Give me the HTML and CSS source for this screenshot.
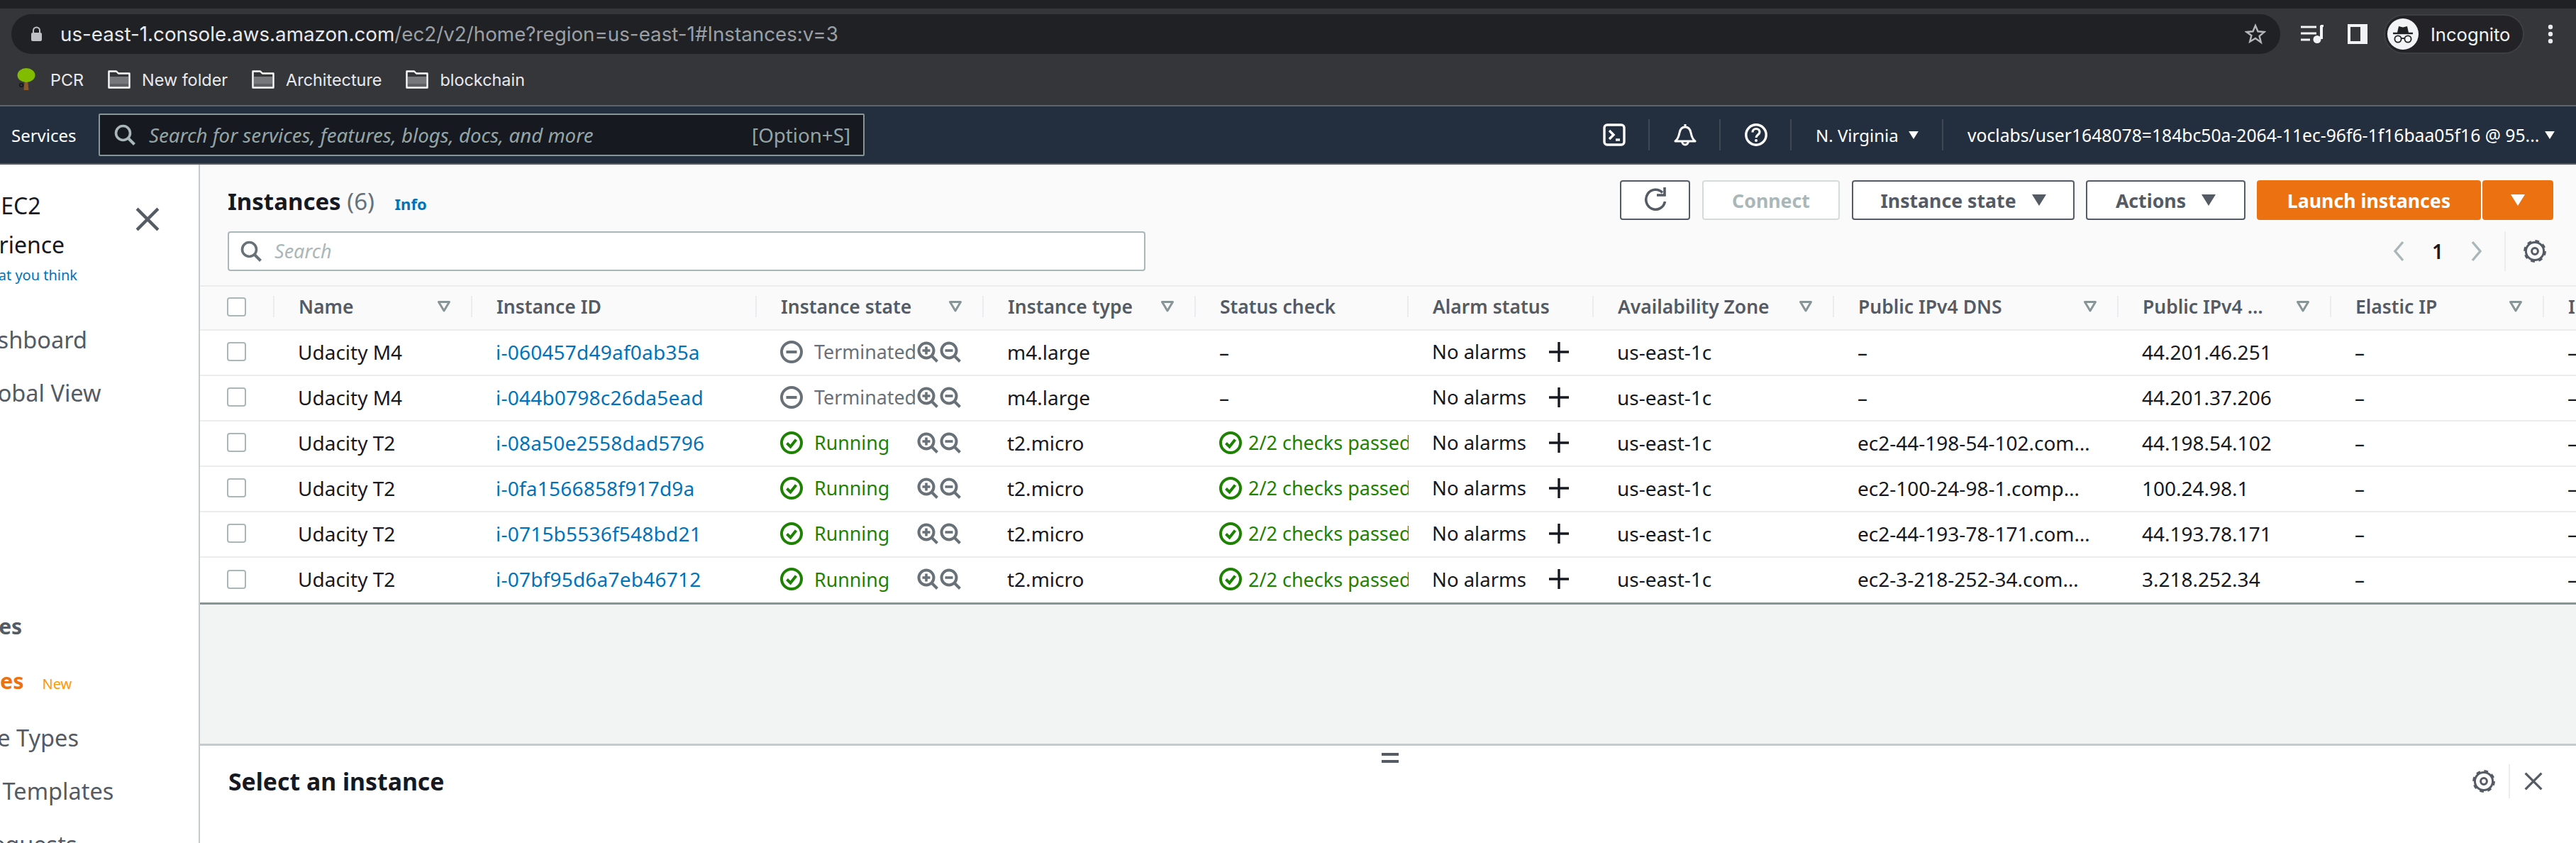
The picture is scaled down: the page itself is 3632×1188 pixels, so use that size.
FILE: index.html
```html
<!DOCTYPE html>
<html lang="en">
<head>
<meta charset="utf-8">
<title>Instances | EC2 Management Console</title>
<link rel="stylesheet" href="styles.css">
</head>
<body>
<svg class="defs" width="0" height="0" aria-hidden="true">
  <symbol id="folder" viewBox="0 0 32 26"><path d="M1.5 24.5V1.5H12l3 3h15.5v20z" fill="none" stroke="#fff" stroke-width="2.4" stroke-linejoin="round"/><rect x="3" y="9" width="26" height="14" fill="#77787b"/><rect x="3" y="19" width="26" height="4" fill="#5f6063"/></symbol>
  <symbol id="caret" viewBox="0 0 20 16"><path d="M0 0h20L10 16z"/></symbol>
  <symbol id="filter" viewBox="0 0 18 16"><path d="M1.5 1.5h15L9 14z" fill="none" stroke="#879596" stroke-width="3" stroke-linejoin="round"/></symbol>
  <symbol id="term" viewBox="0 0 32 32"><circle cx="16" cy="16" r="14" fill="none" stroke="#687078" stroke-width="4"/><path d="M8.5 16h15" stroke="#687078" stroke-width="4"/></symbol>
  <symbol id="run" viewBox="0 0 32 32"><circle cx="16" cy="16" r="14" fill="none" stroke="#1d8102" stroke-width="4"/><path d="M9.5 16.5l5 5 8-10" fill="none" stroke="#1d8102" stroke-width="4"/></symbol>
  <symbol id="zin" viewBox="0 0 30 30"><circle cx="13" cy="13" r="10.5" fill="none" stroke="#687078" stroke-width="4"/><path d="M20.5 20.5l8 8" stroke="#687078" stroke-width="4"/><path d="M7.5 13h11M13 7.5v11" stroke="#687078" stroke-width="3.6"/></symbol>
  <symbol id="zout" viewBox="0 0 30 30"><circle cx="13" cy="13" r="10.5" fill="none" stroke="#687078" stroke-width="4"/><path d="M20.5 20.5l8 8" stroke="#687078" stroke-width="4"/><path d="M7.5 13h11" stroke="#687078" stroke-width="3.6"/></symbol>
  <symbol id="plus" viewBox="0 0 28 28"><path d="M14 0v28M0 14h28" stroke="#16191f" stroke-width="3.4"/></symbol>
  <symbol id="gear" viewBox="0 0 32 32"><circle cx="16" cy="16" r="12.6" fill="none" stroke="#545b64" stroke-width="3"/><circle cx="16" cy="16" r="14.2" fill="none" stroke="#545b64" stroke-width="3.4" stroke-dasharray="5.6 5.55"/><circle cx="16" cy="16" r="4.4" fill="none" stroke="#545b64" stroke-width="3"/></symbol>
  <symbol id="close" viewBox="0 0 32 32"><path d="M2 2l28 28M30 2L2 30" stroke="#545b64" stroke-width="4"/></symbol>
  <symbol id="lens" viewBox="0 0 30 30"><circle cx="12.5" cy="12.5" r="10" fill="none" stroke="currentColor" stroke-width="3.6"/><path d="M20 20l8.5 8.5" stroke="currentColor" stroke-width="4"/></symbol>
</svg>

<div class="tabstrip"></div>

<header class="toolbar">
  <div class="address-row">
    <div class="address">
      <svg class="lock" viewBox="0 0 17 22"><path d="M4 10V6a4.500 4.500 0 0 1 9 0v4" fill="none" stroke="#bdc1c6" stroke-width="2"/><rect x="1" y="9" width="15" height="12" rx="2" fill="#bdc1c6"/></svg>
      <span class="url"><span class="url-host">us-east-1.console.aws.amazon.com</span>/ec2/v2/home?region=us-east-1#Instances:v=3</span>
      <svg class="star" viewBox="0 0 30 30"><path d="M15 3l3.500 8.300 9 .700-6.900 5.900 2.200 8.800L15 21l-7.800 4.700 2.200-8.800L2.500 12l9-.700z" fill="none" stroke="#b5b8bb" stroke-width="2.400"/></svg>
    </div>
    <svg class="queue" viewBox="0 0 32 26"><path d="M0 3h22M0 12h22M0 21h13" stroke="#f1f3f4" stroke-width="3"/><path d="M29 1v19" stroke="#f1f3f4" stroke-width="4"/><path d="M28 1h4" stroke="#f1f3f4" stroke-width="4"/><circle cx="23" cy="20.500" r="5.500" fill="#f1f3f4"/></svg>
    <div class="sidepanel"><div class="sidepanel-hole"></div></div>
    <div class="incognito">
      <svg class="spy" viewBox="0 0 44 44"><circle cx="22" cy="22" r="22" fill="#f1f3f4"/><path d="M14 20l2-9 6 1.500 6-1.500 2 9z" fill="#202124"/><path d="M8 21h28" stroke="#202124" stroke-width="2.400"/><circle cx="15" cy="29" r="4.600" fill="none" stroke="#202124" stroke-width="1.800"/><circle cx="29" cy="29" r="4.600" fill="none" stroke="#202124" stroke-width="1.800"/><path d="M19.500 28h5" stroke="#202124" stroke-width="1.800"/></svg>
      <span>Incognito</span>
    </div>
    <svg class="dots" viewBox="0 0 8 28"><circle cx="4" cy="4" r="3.200" fill="#e8eaed"/><circle cx="4" cy="14" r="3.200" fill="#e8eaed"/><circle cx="4" cy="24" r="3.200" fill="#e8eaed"/></svg>
  </div>
  <div class="bookmarks">
    <span class="bookmark bookmark-pcr">
      <svg class="tree" viewBox="0 0 26 32"><path d="M11 17h4l1.500 14h-7z" fill="#8b5a2b"/><ellipse cx="13" cy="10" rx="12.500" ry="10" fill="#82bc00"/><circle cx="6" cy="24" r="2.400" fill="none" stroke="#111" stroke-width="1.300"/></svg>
      PCR
    </span>
    <span class="bookmark"><svg class="folder"><use href="#folder"/></svg>New folder</span>
    <span class="bookmark"><svg class="folder"><use href="#folder"/></svg>Architecture</span>
    <span class="bookmark"><svg class="folder"><use href="#folder"/></svg>blockchain</span>
  </div>
</header>

<nav class="topnav">
  <span class="services">Services</span>
  <div class="global-search">
    <svg class="global-lens"><use href="#lens"/></svg>
    <span class="global-placeholder">Search for services, features, blogs, docs, and more</span>
    <span class="global-key">[Option+S]</span>
  </div>
  <div class="nav-right">
    <div class="nav-item nav-icon">
      <svg class="nav-svg" viewBox="0 0 32 32"><rect x="2" y="2" width="28" height="28" rx="4" fill="none" stroke="#fff" stroke-width="3.400"/><path d="M9 10l6 6-6 6" fill="none" stroke="#fff" stroke-width="3.400"/><path d="M18 23h6" stroke="#fff" stroke-width="3.400"/></svg>
    </div>
    <div class="nav-item nav-icon">
      <svg class="nav-svg" viewBox="0 0 32 32"><path d="M16 1v3M2 25c4-3 5-7 6-12 1-5 4-8 8-8s7 3 8 8c1 5 2 9 6 12z" fill="none" stroke="#fff" stroke-width="3" stroke-linejoin="round"/><path d="M11.500 25a4.500 5 0 0 0 9 0" fill="none" stroke="#fff" stroke-width="3"/></svg>
    </div>
    <div class="nav-item nav-icon">
      <svg class="nav-svg" viewBox="0 0 32 32"><circle cx="16" cy="16" r="14.200" fill="none" stroke="#fff" stroke-width="3.400"/><path d="M11 12.500c0-3 2.200-5 5-5s5 2 5 4.500c0 4-5 4-5 8" fill="none" stroke="#fff" stroke-width="3.200"/><circle cx="16" cy="24" r="2" fill="#fff"/></svg>
    </div>
    <div class="nav-item nav-region"><span>N. Virginia</span><svg class="nav-caret"><use href="#caret"/></svg></div>
    <div class="nav-item nav-account"><span class="account-text">voclabs/user1648078=184bc50a-2064-11ec-96f6-1f16baa05f16 @ 95...</span><svg class="nav-caret account-caret"><use href="#caret"/></svg></div>
  </div>
</nav>

<div class="workspace">
  <aside class="sidebar">
    <div class="side-title">New EC2<br>Experience</div>
    <svg class="side-close"><use href="#close"/></svg>
    <a class="side-link">Tell us what you think</a>
    <ul class="side-list">
      <li class="side-item side-dash">EC2 Dashboard</li>
      <li class="side-item side-global">EC2 Global View</li>
      <li class="side-item side-section">Instances</li>
      <li class="side-item side-active">Instances <span class="side-new">New</span></li>
      <li class="side-item side-types">Instance Types</li>
      <li class="side-item side-templates">Launch Templates</li>
      <li class="side-item side-spot">Spot Requests</li>
    </ul>
  </aside>

  <main class="main">
    <div class="head-row">
      <h1 class="title">Instances <span class="count">(6)</span> <a class="info">Info</a></h1>
      <div class="actions">
        <button class="btn btn-refresh"><svg viewBox="0 0 32 36" class="refresh"><path d="M26 7.500A13.500 14 0 1 0 29.500 20" fill="none" stroke="#545b64" stroke-width="3.600"/><path d="M29 0v11H18" fill="none" stroke="#545b64" stroke-width="3.600"/></svg></button>
        <button class="btn btn-connect">Connect</button>
        <button class="btn btn-state">Instance state<svg class="btn-caret"><use href="#caret"/></svg></button>
        <button class="btn btn-actions">Actions<svg class="btn-caret"><use href="#caret"/></svg></button>
        <button class="btn btn-launch">Launch instances</button>
        <button class="btn btn-launch-more"><svg class="btn-caret"><use href="#caret"/></svg></button>
      </div>
    </div>

    <div class="filter-row">
      <div class="search">
        <svg class="search-lens"><use href="#lens"/></svg>
        <span class="search-text">Search</span>
      </div>
      <div class="pager">
        <svg class="chev" viewBox="0 0 16 30"><path d="M14 2L3 15l11 13" fill="none" stroke="#aab7b8" stroke-width="3.400"/></svg>
        <span class="page">1</span>
        <svg class="chev" viewBox="0 0 16 30"><path d="M2 2l11 13L2 28" fill="none" stroke="#aab7b8" stroke-width="3.400"/></svg>
        <div class="pager-gear"><svg class="gear"><use href="#gear"/></svg></div>
      </div>
    </div>

    <div class="table-wrap">
      <table class="grid">
        <colgroup>
          <col class="c-check"><col class="c-name"><col class="c-id"><col class="c-state"><col class="c-type"><col class="c-status"><col class="c-alarm"><col class="c-az"><col class="c-dns"><col class="c-ip"><col class="c-eip"><col class="c-last">
        </colgroup>
        <thead>
          <tr>
            <th><div class="th-in th-check"><span class="box"></span></div></th>
            <th><div class="th-in"><span>Name</span><svg class="filter"><use href="#filter"/></svg></div></th>
            <th><div class="th-in"><span>Instance ID</span></div></th>
            <th><div class="th-in"><span>Instance state</span><svg class="filter"><use href="#filter"/></svg></div></th>
            <th><div class="th-in"><span>Instance type</span><svg class="filter"><use href="#filter"/></svg></div></th>
            <th><div class="th-in"><span>Status check</span></div></th>
            <th><div class="th-in"><span>Alarm status</span></div></th>
            <th><div class="th-in"><span>Availability Zone</span><svg class="filter"><use href="#filter"/></svg></div></th>
            <th><div class="th-in"><span>Public IPv4 DNS</span><svg class="filter"><use href="#filter"/></svg></div></th>
            <th><div class="th-in"><span class="th-clip">Public IPv4 address</span><svg class="filter"><use href="#filter"/></svg></div></th>
            <th><div class="th-in"><span>Elastic IP</span><svg class="filter"><use href="#filter"/></svg></div></th>
            <th><div class="th-in th-last"><span>IPv6</span></div></th>
          </tr>
        </thead>
        <tbody>
          <tr>
            <td class="td-check"><span class="box"></span></td><td>Udacity M4</td><td><a class="link">i-060457d49af0ab35a</a></td>
            <td><div class="state term"><svg class="st-icon"><use href="#term"/></svg><span class="st-text">Terminated</span><svg class="z"><use href="#zin"/></svg><svg class="z"><use href="#zout"/></svg></div></td>
            <td>m4.large</td><td>–</td>
            <td><div class="alarm">No alarms<svg class="plus"><use href="#plus"/></svg></div></td>
            <td>us-east-1c</td><td>–</td><td>44.201.46.251</td><td>–</td><td>–</td>
          </tr>
          <tr>
            <td class="td-check"><span class="box"></span></td><td>Udacity M4</td><td><a class="link">i-044b0798c26da5ead</a></td>
            <td><div class="state term"><svg class="st-icon"><use href="#term"/></svg><span class="st-text">Terminated</span><svg class="z"><use href="#zin"/></svg><svg class="z"><use href="#zout"/></svg></div></td>
            <td>m4.large</td><td>–</td>
            <td><div class="alarm">No alarms<svg class="plus"><use href="#plus"/></svg></div></td>
            <td>us-east-1c</td><td>–</td><td>44.201.37.206</td><td>–</td><td>–</td>
          </tr>
          <tr>
            <td class="td-check"><span class="box"></span></td><td>Udacity T2</td><td><a class="link">i-08a50e2558dad5796</a></td>
            <td><div class="state ok"><svg class="st-icon"><use href="#run"/></svg><span class="st-text">Running</span><svg class="z"><use href="#zin"/></svg><svg class="z"><use href="#zout"/></svg></div></td>
            <td>t2.micro</td><td><div class="check"><svg class="ck-icon"><use href="#run"/></svg><span>2/2 checks passed</span></div></td>
            <td><div class="alarm">No alarms<svg class="plus"><use href="#plus"/></svg></div></td>
            <td>us-east-1c</td><td><div class="dns">ec2-44-198-54-102.compute-1.amazonaws.com</div></td><td>44.198.54.102</td><td>–</td><td>–</td>
          </tr>
          <tr>
            <td class="td-check"><span class="box"></span></td><td>Udacity T2</td><td><a class="link">i-0fa1566858f917d9a</a></td>
            <td><div class="state ok"><svg class="st-icon"><use href="#run"/></svg><span class="st-text">Running</span><svg class="z"><use href="#zin"/></svg><svg class="z"><use href="#zout"/></svg></div></td>
            <td>t2.micro</td><td><div class="check"><svg class="ck-icon"><use href="#run"/></svg><span>2/2 checks passed</span></div></td>
            <td><div class="alarm">No alarms<svg class="plus"><use href="#plus"/></svg></div></td>
            <td>us-east-1c</td><td><div class="dns">ec2-100-24-98-1.compute-1.amazonaws.com</div></td><td>100.24.98.1</td><td>–</td><td>–</td>
          </tr>
          <tr>
            <td class="td-check"><span class="box"></span></td><td>Udacity T2</td><td><a class="link">i-0715b5536f548bd21</a></td>
            <td><div class="state ok"><svg class="st-icon"><use href="#run"/></svg><span class="st-text">Running</span><svg class="z"><use href="#zin"/></svg><svg class="z"><use href="#zout"/></svg></div></td>
            <td>t2.micro</td><td><div class="check"><svg class="ck-icon"><use href="#run"/></svg><span>2/2 checks passed</span></div></td>
            <td><div class="alarm">No alarms<svg class="plus"><use href="#plus"/></svg></div></td>
            <td>us-east-1c</td><td><div class="dns">ec2-44-193-78-171.compute-1.amazonaws.com</div></td><td>44.193.78.171</td><td>–</td><td>–</td>
          </tr>
          <tr class="row-last">
            <td class="td-check"><span class="box"></span></td><td>Udacity T2</td><td><a class="link">i-07bf95d6a7eb46712</a></td>
            <td><div class="state ok"><svg class="st-icon"><use href="#run"/></svg><span class="st-text">Running</span><svg class="z"><use href="#zin"/></svg><svg class="z"><use href="#zout"/></svg></div></td>
            <td>t2.micro</td><td><div class="check"><svg class="ck-icon"><use href="#run"/></svg><span>2/2 checks passed</span></div></td>
            <td><div class="alarm">No alarms<svg class="plus"><use href="#plus"/></svg></div></td>
            <td>us-east-1c</td><td><div class="dns">ec2-3-218-252-34.compute-1.amazonaws.com</div></td><td>3.218.252.34</td><td>–</td><td>–</td>
          </tr>
        </tbody>
      </table>
    </div>

    <div class="gap-area"></div>

    <section class="detail">
      <div class="handle"><i></i><i></i></div>
      <div class="detail-row">
        <h2 class="detail-title">Select an instance</h2>
        <div class="detail-tools">
          <svg class="gear"><use href="#gear"/></svg>
          <span class="detail-sep"></span>
          <svg class="detail-close"><use href="#close"/></svg>
        </div>
      </div>
    </section>
  </main>
</div>
</body>
</html>
```
FILE: styles.css
```css
* { box-sizing: border-box; }
html, body { margin: 0; padding: 0; }
body {
  width: 3632px;
  height: 1188px;
  overflow: hidden;
  display: flex;
  flex-direction: column;
  font-family: "Noto Sans", "Open Sans", sans-serif;
  font-size: 28px;
  color: #16191f;
  background: #fff;
}
.defs { position: absolute; }

/* browser chrome */
.tabstrip { height: 12px; background: #202124; flex: none; }
.toolbar {
  height: 138px;
  flex: none;
  background: #35363a;
  border-bottom: 2px solid #5f6368;
  font-family: Inter, "Liberation Sans", sans-serif;
}
.address-row { display: flex; align-items: center; height: 56px; margin-top: 8px; padding-left: 16px; }
.address {
  width: 3199px;
  height: 56px;
  background: #202124;
  border-radius: 28px;
  display: flex;
  align-items: center;
  padding: 0 20px 0 27px;
}
.lock { width: 17px; height: 22px; flex: none; }
.url { margin-left: 25px; font-size: 27.75px; color: #9aa0a6; white-space: nowrap; }
.url-host { color: #e8eaed; }
.star { width: 30px; height: 30px; margin-left: auto; }
.queue { width: 32px; height: 26px; margin-left: 29px; flex: none; }
.sidepanel { width: 28px; height: 28px; margin-left: 34px; background: #f1f3f4; padding: 4px 10px 4px 4px; flex: none; }
.sidepanel-hole { width: 100%; height: 100%; background: #35363a; }
.incognito {
  width: 198px;
  height: 56px;
  margin-left: 23px;
  border-radius: 28px;
  background: #232327;
  border: 2px solid #3e3f43;
  display: flex;
  align-items: center;
  padding-left: 3px;
  color: #f1f3f4;
  font-size: 25.6px;
  flex: none;
}
.spy { width: 44px; height: 44px; margin-right: 17px; }
.dots { width: 8px; height: 28px; margin-left: 33px; flex: none; }
.bookmarks { display: flex; align-items: center; height: 72px; padding-left: 24px; color: #e8eaed; font-size: 23.4px; }
.bookmark { display: flex; align-items: center; margin-right: 34px; }
.tree { width: 26px; height: 32px; margin-right: 21px; }
.folder { width: 32px; height: 26px; margin-right: 16px; }

/* aws nav */
.topnav {
  height: 82px;
  flex: none;
  background: #232f3e;
  border-bottom: 2px solid #545b64;
  display: flex;
  align-items: center;
  color: #fff;
  font-size: 24px;
}
.services { width: 139px; padding-left: 16px; flex: none; }
.global-search {
  width: 1080px;
  height: 60px;
  background: #16191f;
  border: 2px solid #879596;
  border-radius: 2px;
  display: flex;
  align-items: center;
  padding: 0 18px 0 20px;
  color: #95a5a6;
  font-size: 27.7px;
}
.global-lens { width: 30px; height: 30px; color: #aab7b8; flex: none; }
.global-placeholder { margin-left: 19px; font-style: italic; }
.global-key { margin-left: auto; }
.nav-right { display: flex; align-items: center; margin-left: auto; width: 1406px; }
.nav-item { height: 44px; display: flex; align-items: center; border-right: 2px solid #414750; }
.nav-icon { width: 100px; justify-content: center; padding-left: 1px; }
.nav-svg { width: 32px; height: 32px; }
.nav-region { width: 214px; padding-left: 34px; }
.nav-account { border-right: 0; padding-left: 34px; width: 892px; }
.account-text { font-size: 24.7px; white-space: nowrap; }
.nav-caret { width: 16px; height: 11px; fill: #fff; margin-left: 13px; flex: none; }
.account-caret { margin-left: 7px; }

/* workspace */
.workspace { flex: 1; display: flex; min-height: 0; }
.sidebar {
  width: 282px;
  flex: none;
  border-right: 2px solid #c5cbcc;
  background: #fff;
  overflow: hidden;
  position: relative;
  padding-top: 30px;
  color: #545b64;
}
.side-title { margin-left: -74px; font-size: 32px; line-height: 55px; color: #16191f; white-space: nowrap; }
.side-close { position: absolute; left: 191px; top: 60px; width: 34px; height: 34px; }
.side-link { display: block; margin-left: -94px; font-size: 20px; line-height: 32px; color: #0073bb; white-space: nowrap; }
.side-list { list-style: none; margin: 37px 0 0; padding: 0; }
.side-item { font-size: 32.5px; line-height: 75px; white-space: nowrap; }
.side-dash { margin-left: -111px; }
.side-global { margin-left: -101px; margin-bottom: 254px; }
.side-section { margin-left: -114px; font-weight: 700; font-size: 30px; margin-bottom: 2px; }
.side-active { margin-left: -114px; font-weight: 700; font-size: 30.5px; color: #ec7211; margin-bottom: 1px; }
.side-new { margin-left: 18px; font-size: 20px; font-weight: 400; color: #ff9900; }
.side-types { margin-left: -116px; }
.side-templates { margin-left: -116px; }
.side-spot { margin-left: -109px; }

/* main */
.main { flex: 1; min-width: 0; display: flex; flex-direction: column; background: #fafafa; }
.head-row { display: flex; justify-content: space-between; padding: 22px 32px 0 39px; flex: none; }
.title { margin: 5px 0 0; font-size: 33px; line-height: 50px; font-weight: 700; white-space: nowrap; }
.count { font-weight: 400; color: #687078; }
.info { margin-left: 20px; font-size: 22px; color: #0073bb; font-weight: 700; }
.actions { display: flex; }
.btn {
  height: 56px;
  font: 700 26.7px "Noto Sans", sans-serif;
  border: 2px solid #545b64;
  border-radius: 4px;
  background: #fff;
  color: #545b64;
  padding: 0;
  display: flex;
  align-items: center;
  justify-content: center;
  flex: none;
}
.btn-refresh { width: 99px; margin-right: 17px; }
.refresh { width: 32px; height: 36px; }
.btn-connect { width: 194px; margin-right: 17px; border-color: #d5dbdb; color: #aab7b8; }
.btn-state { width: 314px; margin-right: 16px; }
.btn-actions { width: 225px; margin-right: 16px; }
.btn-launch { width: 316px; margin-right: 2px; background: #ec7211; border-color: #ec7211; color: #fff; }
.btn-launch-more { width: 100px; background: #ec7211; border-color: #ec7211; fill: #fff; }
.btn-caret { width: 20px; height: 16px; margin-left: 22px; fill: #545b64; }
.btn-launch-more .btn-caret { margin-left: 0; fill: #fff; }

.filter-row { display: flex; justify-content: space-between; align-items: center; height: 56px; margin-top: 14px; padding: 0 0 0 39px; flex: none; }
.search {
  width: 1294px;
  height: 56px;
  background: #fff;
  border: 2px solid #aab7b8;
  border-radius: 4px;
  display: flex;
  align-items: center;
  padding-left: 16px;
}
.search-lens { width: 30px; height: 30px; color: #687078; flex: none; }
.search-text { margin-left: 18px; padding-bottom: 2px; font-size: 27px; font-style: italic; color: #aab7b8; }
.pager { display: flex; align-items: center; height: 56px; }
.chev { width: 16px; height: 30px; }
.page { width: 94px; text-align: center; font-size: 28px; font-weight: 600; }
.pager-gear { display: flex; align-items: center; height: 56px; margin-left: 31px; padding-left: 25px; padding-right: 42px; border-left: 2px solid #eaeded; }
.gear { width: 32px; height: 32px; flex: none; }

/* table */
.table-wrap { margin-top: 20px; border-top: 2px solid #eaeded; overflow: hidden; flex: none; background: #fff; }
.grid { border-collapse: separate; border-spacing: 0; table-layout: fixed; width: 3350px; }
.c-check { width: 105px; } .c-name { width: 279px; } .c-id { width: 401px; } .c-state { width: 320px; }
.c-type { width: 299px; } .c-status { width: 300px; } .c-alarm { width: 261px; } .c-az { width: 339px; }
.c-dns { width: 401px; } .c-ip { width: 300px; } .c-eip { width: 300px; } .c-last { width: 45px; }
.grid th {
  height: 62px;
  padding: 0 0 4px;
  background: #fafafa;
  border-bottom: 2px solid #eaeded;
  color: #545b64;
  font-size: 26.5px;
  font-weight: 600;
  text-align: left;
  white-space: nowrap;
}
.th-in {
  height: 30px;
  display: flex;
  align-items: center;
  justify-content: space-between;
  padding: 0 29px 0 34px;
  border-right: 2px solid #eaeded;
}
.th-check { padding-left: 38px; }
.th-last { border-right: 0; }
.th-clip { display: block; width: 182px; overflow: hidden; text-overflow: ellipsis; }
.filter { width: 18px; height: 16px; flex: none; }
.grid td {
  height: 64px;
  padding: 0 0 3px 33px;
  border-bottom: 2px solid #eaeded;
  background: #fff;
  white-space: nowrap;
  overflow: hidden;
}
.grid .td-check { padding-left: 38px; }
.row-last td { height: 66px; border-bottom: 3px solid #879596; }
.box { display: block; width: 27px; height: 27px; background: #fff; border: 2px solid #aab7b8; border-radius: 4px; }
.link { color: #0073bb; letter-spacing: .22px; }
.state { display: flex; align-items: center; }
.st-icon { width: 32px; height: 32px; flex: none; }
.st-text { width: 145px; margin-left: 16px; flex: none; font-size: 26.8px; }
.term { color: #687078; }
.ok { color: #1d8102; }
.z { width: 30px; height: 30px; margin-right: 2px; flex: none; }
.check { display: flex; align-items: center; color: #1d8102; width: 271px; overflow: hidden; font-size: 27px; }
.ck-icon { width: 32px; height: 32px; margin-right: 9px; flex: none; }
.alarm { display: flex; align-items: center; font-size: 27.5px; }
.plus { width: 28px; height: 28px; margin-left: 32px; }
.dns { width: 328px; overflow: hidden; text-overflow: ellipsis; }

.gap-area { flex: 1; background: #f2f3f3; }

/* split panel */
.detail { height: 140px; flex: none; background: #fff; border-top: 3px solid #c5cbcc; padding: 10px 0 0; }
.handle { display: flex; flex-direction: column; align-items: center; gap: 6px; padding-left: 6px; }
.handle i { display: block; width: 24px; height: 4px; background: #545b64; }
.detail-row { display: flex; align-items: center; justify-content: space-between; height: 48px; margin-top: 2px; padding-left: 40px; }
.detail-title { margin: 0; font-size: 33.8px; font-weight: 700; }
.detail-tools { display: flex; align-items: center; height: 48px; }
.detail-sep { width: 2px; height: 48px; background: #eaeded; margin: 0 20px 0 19px; }
.detail-close { width: 26px; height: 26px; margin-right: 47px; }
```
